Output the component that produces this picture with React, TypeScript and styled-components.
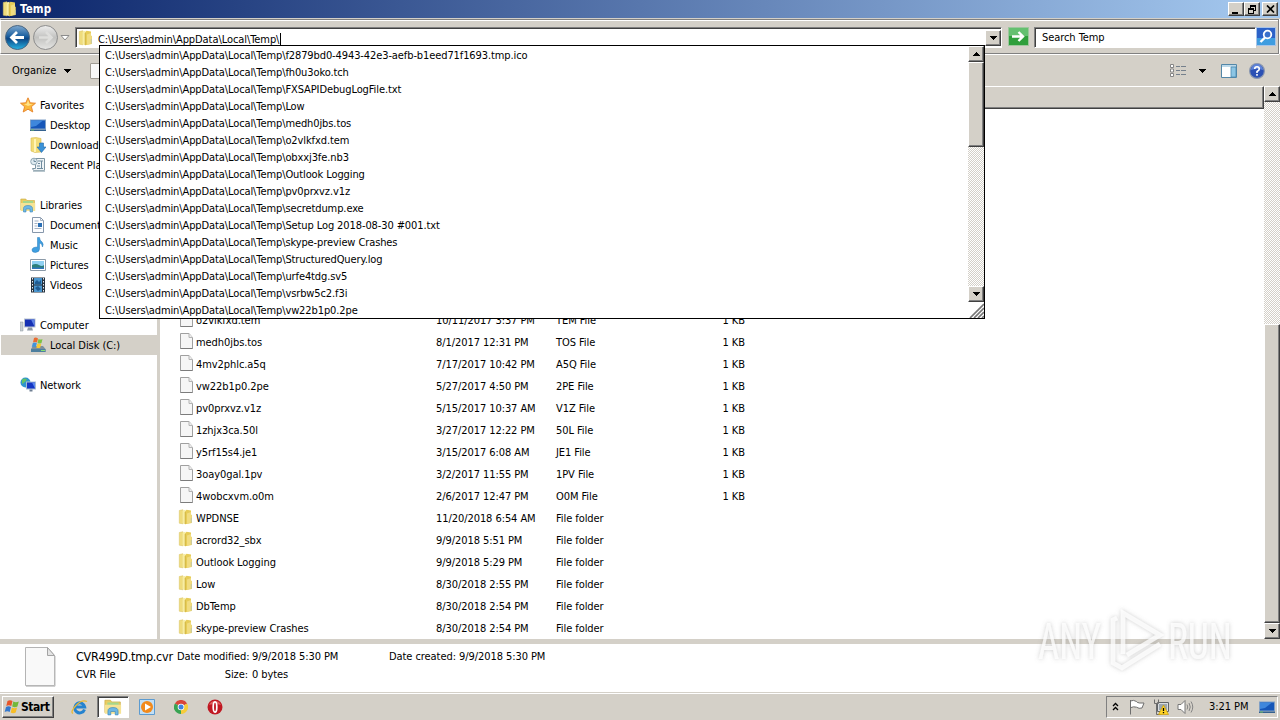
import * as React from 'react';
import styled, { createGlobalStyle, css } from 'styled-components';

const GlobalStyle = createGlobalStyle`
  * { box-sizing: border-box; }
  body {
    margin: 0;
    overflow: hidden;
    background: #d4d0c8;
    color: #000;
    font-family: "DejaVu Sans Condensed", "DejaVu Sans", sans-serif;
    font-stretch: condensed;
    font-size: 11px;
    letter-spacing: -0.07px;
    white-space: nowrap;
  }
  svg { display: block; flex: none; }
`;

const raised = css`
  background: #d4d0c8;
  border: 1px solid;
  border-color: #fff #404040 #404040 #fff;
  box-shadow: inset -1px -1px #808080;
`;

const sunken = css`
  border: 1px solid;
  border-color: #808080 #fff #fff #808080;
  box-shadow: inset 1px 1px #404040;
`;

const Screen = styled.div`
  position: relative;
  width: 1280px;
  height: 720px;
  display: flex;
  flex-direction: column;
  overflow: hidden;
`;

const TitleBar = styled.div`
  height: 18px;
  display: flex;
  align-items: center;
  padding: 0 2px;
  gap: 2px;
  background: linear-gradient(90deg, #0a246a, #a6caf0);
`;

const TitleText = styled.div`
  flex: 1;
  color: #fff;
  font-weight: bold;
  font-size: 11.5px;
  letter-spacing: 0.1px;
`;

const CaptionButton = styled.div<{ $gap?: boolean }>`
  ${raised}
  width: 16px;
  height: 14px;
  margin-left: ${p => (p.$gap ? 2 : 0)}px;
  margin-right: ${p => (p.$gap ? 0 : -2)}px;
  display: flex;
  align-items: center;
  justify-content: center;
`;

const NavBar = styled.div`
  height: 35px;
  margin: 1px 1px 0 0;
  display: flex;
  align-items: flex-start;
  padding: 7px 0 0 4px;
  border: 1px solid #808080;
  border-left-color: #fff;
  box-shadow: inset 0 1px #fff, 0 1px #fff, 1px 0 #fff;
`;

const AddressField = styled.div`
  ${sunken}
  width: 927px;
  height: 21px;
  margin-left: 5px;
  padding: 2px 0 1px 2px;
  display: flex;
  align-items: center;
  background: #fff;
`;

const AddressText = styled.div`
  flex: 1;
  margin: 3px 0 0 4px;
  display: flex;
`;

const Caret = styled.span`
  width: 1px;
  height: 13px;
  margin-left: 1px;
  background: #000;
`;

const GoButton = styled.div`
  margin: 0 5px 0 6px;
`;

const SearchField = styled.div`
  ${sunken}
  width: 222px;
  height: 21px;
  padding: 0 7px 1px;
  display: flex;
  align-items: center;
  background: #fff;
`;

const Toolbar = styled.div`
  height: 32px;
  padding: 1px 15px 0 12px;
  display: flex;
  align-items: center;
  letter-spacing: 0;
`;

const ToolbarButton = styled.div`
  width: 30px;
  height: 16px;
  margin-left: 19px;
  border: 1px solid #a09c94;
  border-radius: 1px;
  background: #f8f8f8;
`;

const Spacer = styled.div`
  flex: 1;
`;

const Gap = styled.div<{ $w: number }>`
  width: ${p => p.$w}px;
`;

const Body = styled.div`
  height: 553px;
  display: flex;
  background: #fff;
`;

const Sidebar = styled.div`
  width: 160px;
  padding: 9px 0 0 1px;
  border-right: 3px solid #d4d0c8;
  overflow: hidden;
`;

const SideRow = styled.div<{ $level: number; $selected?: boolean; $last?: boolean }>`
  height: 20px;
  display: flex;
  align-items: center;
  gap: 4px;
  padding-left: ${p => (p.$level ? 29 : 19)}px;
  margin-bottom: ${p => (p.$last ? 20 : 0)}px;
  background: ${p => (p.$selected ? '#d4d0c8' : 'transparent')};
`;

const Listing = styled.div`
  flex: 1;
  display: flex;
  flex-direction: column;
`;

const ColumnHeader = styled.div`
  ${raised}
  height: 23px;
`;

const Rows = styled.div`
  flex: 1;
  display: flex;
  flex-direction: column;
  justify-content: flex-end;
`;

const FileRow = styled.div`
  height: 22px;
  display: grid;
  grid-template-columns: 18px 240px 120px 120px 69px;
  align-items: center;
  padding-left: 18px;
`;

const FileGlyph = styled.div<{ $file: boolean }>`
  padding: 0 0 2px ${p => (p.$file ? 2 : 0)}px;
`;

const SizeCell = styled.div`
  text-align: right;
`;

const ScrollTrack = styled.div`
  width: 16px;
  display: flex;
  flex-direction: column;
  background: repeating-conic-gradient(#d4d0c8 0 25%, #fff 0 50%) 0 0 / 2px 2px;
`;

const ScrollButton = styled.div`
  ${raised}
  height: 16px;
  flex: none;
  display: flex;
  align-items: center;
  justify-content: center;
`;

const ScrollThumb = styled.div<{ $h: number }>`
  ${raised}
  height: ${p => p.$h}px;
`;

const Details = styled.div`
  height: 53px;
  border-top: 5px solid #d4d0c8;
  background: #fff;
  display: flex;
  padding: 3px 0 0 24px;
`;

const DetailGrid = styled.div`
  display: grid;
  grid-template-columns: 101px 75px 137px 70px 100px;
  grid-auto-rows: 18px;
  align-items: center;
  height: 36px;
  margin-left: 20px;
`;

const DetailName = styled.div`
  font-size: 12.5px;
  letter-spacing: -0.25px;
`;

const DetailLabel = styled.div`
  text-align: right;
  padding-right: 4px;
`;

const Taskbar = styled.div`
  height: 28px;
  padding: 3px 2px 3px;
  display: flex;
  align-items: center;
  border-top: 1px solid #d4d0c8;
  box-shadow: inset 0 1px #fff;
`;

const StartButton = styled.div`
  ${raised}
  width: 52px;
  height: 22px;
  padding-left: 1px;
  display: flex;
  align-items: center;
  font-weight: bold;
  font-size: 12px;
  letter-spacing: -0.45px;
`;

const TaskItem = styled.div<{ $active?: boolean }>`
  width: 32px;
  height: 22px;
  display: flex;
  align-items: center;
  justify-content: center;
  ${p => p.$active && css`
    ${sunken}
    background: #fff;
  `}
`;

const TaskItems = styled.div`
  display: flex;
  gap: 2px;
  margin-left: 9px;
`;

const Tray = styled.div`
  width: 172px;
  height: 22px;
  padding: 0 2px 0 5px;
  display: flex;
  align-items: center;
  border: 1px solid;
  border-color: #808080 #fff #fff #808080;
`;

const Clock = styled.div`
  flex: 1;
  margin-left: 15px;
`;

const Suggestions = styled.div`
  position: absolute;
  left: 99px;
  top: 45px;
  width: 886px;
  height: 274px;
  display: flex;
  background: #fff;
  border: 1px solid #000;
`;

const SuggestionList = styled.div`
  flex: 1;
  overflow: hidden;
  padding: 1px 0 0 5px;
`;

const Suggestion = styled.div`
  height: 17px;
  line-height: 17px;
  letter-spacing: -0.1px;
`;

const SuggestionScroll = styled.div`
  display: flex;
  flex-direction: column;
`;

const SuggestionTrack = styled(ScrollTrack)`
  height: 256px;
`;

const Watermark = styled.svg`
  position: absolute;
  left: 1030px;
  top: 600px;
`;

const Arrow = ({ up }: { up?: boolean }) => (
  <svg width="7" height="4" shapeRendering="crispEdges">
    <path d={up ? 'M3 0h1v1h1v1h1v1h1v1H0V3h1V2h1V1h1z' : 'M0 0h7v1H6v1H5v1H4v1H3V3H2V2H1V1H0z'} />
  </svg>
);

const FolderIcon = () => (
  <svg width="16" height="16" viewBox="0 0 16 16">
    <path d="M1.300 1.500L5 .8v14l-3.700-.6z" fill="#efdc7c" stroke="#dcc668" strokeWidth=".6" />
    <path d="M4.500 1.500L7.500.8v14.500l-3-1z" fill="#f8eda2" />
    <path d="M7 2.500L8.500.8l4.500.7v4l.8.500v8L7 15.300z" fill="#e6cc58" />
    <path d="M9 4.500l4-1.500v10.500l-4 1.300z" fill="#f1dc80" />
    <path d="M7.200 3v12" stroke="#cdae3e" strokeWidth=".8" />
    <path d="M13.300 9v4.500" stroke="#b9c3b0" strokeWidth=".8" />
  </svg>
);

const FileIcon = ({ big }: { big?: boolean }) => (
  <svg width={big ? 32 : 15} height={big ? 40 : 16} viewBox={big ? '0 0 32 40' : '0 0 15 16'}>
    {big ? (
      <>
        <path d="M1.500.5h22l7 8v30h-29z" fill="#f9f9f9" stroke="#b4b4b4" />
        <path d="M23.500 .5v8h7z" fill="#e4e4e4" stroke="#a4a4a4" />
        <path d="M2 39.200h29V9" fill="none" stroke="#bbb" />
      </>
    ) : (
      <>
        <path d="M.500.5h8.500l3.500 4v11H.5z" fill="#f6f6f6" stroke="#a0a0a0" />
        <path d="M9 .5v4h3.500" fill="#eee" stroke="#b4b4b4" />
        <path d="M.5 15.500h12" stroke="#7c7c7c" />
      </>
    )}
  </svg>
);

const Monitor = () => (
  <svg width="16" height="16" viewBox="0 0 16 16">
    <path d="M0 2.500h16v10H0z" fill="#7f9fc6" />
    <path d="M1 3.500h14v8H1z" fill="#1656b8" />
    <path d="M1 3.500h12L6 9 1 10z" fill="#3f87dc" />
    <path d="M0 12.500h16v1.500H0z" fill="#34618f" />
    <path d="M1 13h3" stroke="#6fc06a" />
  </svg>
);

const LibraryIcon = ({ size = 16 }: { size?: number }) => (
  <svg width={size} height={size} viewBox="0 0 16 16">
    <path d="M.8 2h5l1 1.500h7.700V13H.8z" fill="#e9cd62" stroke="#c9a93c" strokeWidth=".6" />
    <path d="M3 4h10v4H3z" fill="#a6d78c" />
    <path d="M.8 6h14.400v8H.8z" fill="#f6e395" />
    <path d="M3.500 15v-3.500q0-3 4.500-3t4.500 3V15h-2.500v-3H6v3z" fill="#6db7e4" stroke="#3c88bb" strokeWidth=".6" />
  </svg>
);

const sideIcons: Record<string, React.ReactNode> = {
  star: (
    <svg width="16" height="16" viewBox="0 0 16 16">
      <path d="M8 .8l2.200 5 5.300.4-4.100 3.500 1.400 5.300L8 12.200 3.200 15l1.400-5.300L.5 6.200l5.300-.4z" fill="#fbb83c" stroke="#e5822a" strokeWidth=".9" />
      <path d="M8 3l1.500 4 3.500.3-5 1.700-4-2 2.800-.3z" fill="#ffe38a" />
    </svg>
  ),
  desktop: <Monitor />,
  downloads: (
    <svg width="16" height="16" viewBox="0 0 16 16">
      <path d="M1 1l5-.5 5 1V15l-6 .5L1 14z" fill="#f2dc77" stroke="#d6b94b" strokeWidth=".6" />
      <path d="M5 2v13" stroke="#fff4b5" strokeWidth="2" />
      <path d="M9.500 6h4v4H16l-4.500 5.500L7 10h2.500z" fill="#3a92d8" stroke="#2168a8" strokeWidth=".6" />
    </svg>
  ),
  recent: (
    <svg width="16" height="16" viewBox="0 0 16 16">
      <path d="M5.500 1.500h9v12h-11l-1-2h3z" fill="#eef3f6" stroke="#7d94a2" />
      <circle cx="4" cy="4.500" r="3.300" fill="#dfeaf0" stroke="#91a8b4" />
      <path d="M4 2.500v2h2M8 4h5M8 6.500h2M7 9h3M7 11.500h6M11.500 4v7" stroke="#6e8b9e" fill="none" />
      <path d="M3 13.500h12v1.500H3z" fill="#b8c6cd" />
    </svg>
  ),
  library: <LibraryIcon />,
  document: (
    <svg width="16" height="16" viewBox="0 0 16 16">
      <path d="M2.500.5h8l3 3v12h-11z" fill="#fcfdff" stroke="#8797ab" />
      <path d="M10.500.5v3h3M4.500 4h4M4.500 6.500h3M4.500 9h3M4.500 11.500h7" fill="none" stroke="#a5b2c2" />
      <path d="M8 6h4v4H8z" fill="#2a6fb5" />
    </svg>
  ),
  music: (
    <svg width="16" height="16" viewBox="0 0 16 16">
      <path d="M7.500.5h2q.2 3 2.500 4.500 2 2 .5 5-.3-3.500-3-4v6q0 3-4 3.500-3.500 0-3.500-2.500 0-2.800 5.500-3z" fill="#3f9fe0" stroke="#2678b8" strokeWidth=".5" />
    </svg>
  ),
  pictures: (
    <svg width="16" height="16" viewBox="0 0 16 16">
      <path d="M.5 2.500h15v11H.5z" fill="#fff" stroke="#8b9aa8" />
      <path d="M2 4h12v8H2z" fill="#8fd0f2" />
      <path d="M2 8q4-2 7 0t5 0v4H2z" fill="#2c7f7a" />
      <path d="M2 10.500h12V12H2z" fill="#2f76bd" />
    </svg>
  ),
  videos: (
    <svg width="16" height="16" viewBox="0 0 16 16">
      <path d="M1 .5h14v15H1z" fill="#26323e" />
      <path d="M4 1h8v6.500H4zM4 8.500h8V15H4z" fill="#4a96cf" />
      <path d="M5 5l2-2 2 2 2-2v4H5zM5 11l3-2 3 3-3 2z" fill="#1d5b93" />
      <path d="M2.500 1v14M13.500 1v14" stroke="#e8edf2" strokeDasharray="1.500 1.500" />
    </svg>
  ),
  computer: (
    <svg width="16" height="16" viewBox="0 0 16 16">
      <path d="M0 5h3v9H0z" fill="#c9cfd4" stroke="#8b949c" strokeWidth=".5" />
      <path d="M4 1.500h11.500v9H4z" fill="#b7c2d0" />
      <path d="M5 2.500h9.500v7H5z" fill="#1631b4" />
      <path d="M11 2.500h3.500v7z" fill="#5e82e6" />
      <path d="M8 10.500h4l1 3H7z" fill="#8d98a6" />
    </svg>
  ),
  disk: (
    <svg width="16" height="16" viewBox="0 0 16 16">
      <path d="M3 9h10l2.500 3v3H1v-3z" fill="#7d8f9c" />
      <path d="M1 12h14.500v3H1z" fill="#4d7f9e" />
      <path d="M11 13h4v1h-4z" fill="#84e070" />
      <path d="M4 1q2-1 4 .5L7 5.500q-2-1-4 0z" fill="#ea6a30" />
      <path d="M8.500 2q2 1 4 0l-1 4q-2 1-4 0z" fill="#7cc242" />
      <path d="M2.800 6q2-1 4 0L6 10q-2-1-4.200 0z" fill="#3f93dc" />
      <path d="M7.300 6.500q2 1 4 0l-1 4q-2 1-4 0z" fill="#f8c832" />
    </svg>
  ),
  network: (
    <svg width="16" height="16" viewBox="0 0 16 16">
      <circle cx="5.500" cy="5.500" r="5" fill="#2f94cf" />
      <path d="M2 2.500q3-2 5 0L5 5 2 7zM6 6l3-2v4H7z" fill="#62c268" />
      <path d="M6 4.500h10v8H6z" fill="#a8bcd3" />
      <path d="M7 5.500h8v6H7z" fill="#1437c4" />
      <path d="M12 5.500h3v6z" fill="#5a86ee" />
      <path d="M9.500 12.500h3v2h-3z" fill="#6e7f92" />
    </svg>
  ),
};

const WindowsFlag = () => (
  <svg width="17" height="16" viewBox="0 0 17 16">
    <path d="M3.500 2q2.500-1.500 5 0L7.300 7q-2.500-1.500-5 0z" fill="#e8562a" />
    <path d="M9.300 2.500q2.500 1.500 5.500 0l-1.400 5q-2.500 1.500-5.200 0z" fill="#73b83a" />
    <path d="M2 8q2.500-1.500 5 0l-1.300 5q-2.400-1.500-5 0z" fill="#3478ce" />
    <path d="M7.900 8.500q2.500 1.500 5.200 0l-1.400 5q-2.500 1.500-5 0z" fill="#f7bd26" />
  </svg>
);

const sideRows = [
  { label: 'Favorites', icon: 'star', level: 0 },
  { label: 'Desktop', icon: 'desktop', level: 1 },
  { label: 'Downloads', icon: 'downloads', level: 1 },
  { label: 'Recent Places', icon: 'recent', level: 1, last: true },
  { label: 'Libraries', icon: 'library', level: 0 },
  { label: 'Documents', icon: 'document', level: 1 },
  { label: 'Music', icon: 'music', level: 1 },
  { label: 'Pictures', icon: 'pictures', level: 1 },
  { label: 'Videos', icon: 'videos', level: 1, last: true },
  { label: 'Computer', icon: 'computer', level: 0 },
  { label: 'Local Disk (C:)', icon: 'disk', level: 1, selected: true, last: true },
  { label: 'Network', icon: 'network', level: 0 },
];

const files = [
  ['o2vlkfxd.tem', '10/11/2017 3:37 PM', 'TEM File', '1 KB'],
  ['medh0jbs.tos', '8/1/2017 12:31 PM', 'TOS File', '1 KB'],
  ['4mv2phlc.a5q', '7/17/2017 10:42 PM', 'A5Q File', '1 KB'],
  ['vw22b1p0.2pe', '5/27/2017 4:50 PM', '2PE File', '1 KB'],
  ['pv0prxvz.v1z', '5/15/2017 10:37 AM', 'V1Z File', '1 KB'],
  ['1zhjx3ca.50l', '3/27/2017 12:22 PM', '50L File', '1 KB'],
  ['y5rf15s4.je1', '3/15/2017 6:08 AM', 'JE1 File', '1 KB'],
  ['3oay0gal.1pv', '3/2/2017 11:55 PM', '1PV File', '1 KB'],
  ['4wobcxvm.o0m', '2/6/2017 12:47 PM', 'O0M File', '1 KB'],
  ['WPDNSE', '11/20/2018 6:54 AM', 'File folder', ''],
  ['acrord32_sbx', '9/9/2018 5:51 PM', 'File folder', ''],
  ['Outlook Logging', '9/9/2018 5:29 PM', 'File folder', ''],
  ['Low', '8/30/2018 2:55 PM', 'File folder', ''],
  ['DbTemp', '8/30/2018 2:54 PM', 'File folder', ''],
  ['skype-preview Crashes', '8/30/2018 2:54 PM', 'File folder', ''],
];

const basePath = 'C:\\Users\\admin\\AppData\\Local\\Temp\\';

const suggestions = [
  'f2879bd0-4943-42e3-aefb-b1eed71f1693.tmp.ico',
  'fh0u3oko.tch',
  'FXSAPIDebugLogFile.txt',
  'Low',
  'medh0jbs.tos',
  'o2vlkfxd.tem',
  'obxxj3fe.nb3',
  'Outlook Logging',
  'pv0prxvz.v1z',
  'secretdump.exe',
  'Setup Log 2018-08-30 #001.txt',
  'skype-preview Crashes',
  'StructuredQuery.log',
  'urfe4tdg.sv5',
  'vsrbw5c2.f3i',
  'vw22b1p0.2pe',
];

function Navigation() {
  return (
    <NavBar>
      <svg width="65" height="28" viewBox="0 0 65 28" overflow="visible">
        <defs>
          <linearGradient id="back" x2="0" y2="1">
            <stop offset="0" stopColor="#7fa9d0" />
            <stop offset=".45" stopColor="#1b5f9f" />
            <stop offset=".55" stopColor="#0c4685" />
            <stop offset="1" stopColor="#27b4e4" />
          </linearGradient>
          <linearGradient id="fwd" x2="0" y2="1">
            <stop offset="0" stopColor="#eee" />
            <stop offset=".5" stopColor="#c2c2c0" />
            <stop offset="1" stopColor="#e6e6e4" />
          </linearGradient>
        </defs>
        <circle cx="12.500" cy="10.500" r="12" fill="url(#back)" stroke="#4b6680" />
        <path d="M19 10.500H7M12 5l-5.500 5.500L12 16" fill="none" stroke="#fff" strokeWidth="2.800" />
        <circle cx="40.500" cy="10.500" r="12" fill="url(#fwd)" stroke="#8c8c8c" />
        <path d="M34 10.500h12M41 5l5.500 5.500L41 16" fill="none" stroke="#dededc" strokeWidth="2.600" />
        <path d="M56 8.500h8l-4 4.500z" fill="#fff" stroke="#8c8c8c" />
      </svg>
      <AddressField>
        <FolderIcon />
        <AddressText>{basePath}<Caret /></AddressText>
        <ScrollTrack>
          <ScrollButton><Arrow /></ScrollButton>
        </ScrollTrack>
      </AddressField>
      <GoButton>
        <svg width="21" height="20" viewBox="0 0 21 20">
          <path d="M.5.500h20v18H.5z" fill="#2f9f3c" stroke="#9ec79e" />
          <path d="M1 1h19v8H1z" fill="#64c070" />
          <path d="M4 9.500h11M10.500 5l4.500 4.500-4.500 4.500" fill="none" stroke="#fff" strokeWidth="2.400" />
        </svg>
      </GoButton>
      <SearchField>Search Temp</SearchField>
      <svg width="20" height="20" viewBox="0 0 20 20">
        <path d="M.5.500h19v18H.5z" fill="#2c62c8" stroke="#a8c4e8" />
        <path d="M1 11h18v7H1z" fill="#3f9de0" />
        <circle cx="11.500" cy="7.500" r="3.800" fill="#3a70cc" stroke="#fff" strokeWidth="1.800" />
        <path d="M9 10.500L4.500 15" stroke="#fff" strokeWidth="2.400" />
      </svg>
    </NavBar>
  );
}

function Tools() {
  return (
    <Toolbar>
      Organize
      <Gap $w={8} />
      <Arrow />
      <ToolbarButton />
      <Spacer />
      <svg width="17" height="14" viewBox="0 0 17 14">
        <path d="M.5.500h3v3h-3zM.5 5h3v3h-3zM.5 9.500h3v3h-3z" fill="#fff" stroke="#858585" />
        <path d="M6 2.500h4M11 2.500h5M6 6.500h4M11 6.500h5M6 10.500h4M11 10.500h5" stroke="#75808c" />
      </svg>
      <Gap $w={12} />
      <Arrow />
      <Gap $w={15} />
      <svg width="16" height="14" viewBox="0 0 16 14">
        <path d="M.5.500h15v13H.5z" fill="#fff" stroke="#5387a8" />
        <path d="M1 1h14v2H1z" fill="#bcd9ea" />
        <path d="M10 3h5v10h-5z" fill="#8cc5e4" stroke="#4c88ad" strokeWidth=".8" />
      </svg>
      <Gap $w={12} />
      <svg width="16" height="16" viewBox="0 0 16 16">
        <circle cx="8" cy="8" r="7.400" fill="#2b50b4" stroke="#8b98b0" strokeWidth="1.200" />
        <path d="M2 7a6 6 0 0 1 12 0q-6-2-12 0z" fill="#5f83d8" />
        <path d="M5.700 6q0-2.300 2.300-2.300T10.300 6Q10.300 7.300 8 8.500V10M8 11v1.800" fill="none" stroke="#fff" strokeWidth="1.600" />
      </svg>
    </Toolbar>
  );
}

export default function App() {
  return (
    <>
      <GlobalStyle />
      <Screen>
        <TitleBar>
          <FolderIcon />
          <TitleText>Temp</TitleText>
          <CaptionButton>
            <svg width="10" height="9"><path d="M1 7h6v2H1z" /></svg>
          </CaptionButton>
          <CaptionButton>
            <svg width="10" height="9" viewBox="0 0 10 9" shapeRendering="crispEdges">
              <path d="M3 0h6v6H7V5h1V2H4v1H3zM1 3h6v6H1zM2 5v3h4V5z" fillRule="evenodd" />
            </svg>
          </CaptionButton>
          <CaptionButton $gap>
            <svg width="9" height="8" viewBox="0 0 9 8"><path d="M1 .5l7 7M8 .5l-7 7" stroke="#000" strokeWidth="1.700" /></svg>
          </CaptionButton>
        </TitleBar>
        <Navigation />
        <Tools />

        <Body>
          <Sidebar>
            {sideRows.map(row => (
              <SideRow key={row.label} $level={row.level} $selected={row.selected} $last={row.last}>
                {sideIcons[row.icon]}
                {row.label}
              </SideRow>
            ))}
          </Sidebar>
          <Listing>
            <ColumnHeader />
            <Rows>
              {files.map(([name, date, type, size]) => (
                <FileRow key={name}>
                  <FileGlyph $file={!!size}>{size ? <FileIcon /> : <FolderIcon />}</FileGlyph>
                  <div>{name}</div>
                  <div>{date}</div>
                  <div>{type}</div>
                  <SizeCell>{size}</SizeCell>
                </FileRow>
              ))}
            </Rows>
          </Listing>
          <ScrollTrack>
            <ScrollButton><Arrow up /></ScrollButton>
            <Spacer />
            <ScrollThumb $h={299} />
            <ScrollButton><Arrow /></ScrollButton>
          </ScrollTrack>
        </Body>

        <Details>
          <FileIcon big />
          <DetailGrid>
            <DetailName>CVR499D.tmp.cvr</DetailName>
            <DetailLabel>Date modified:</DetailLabel>
            <div>9/9/2018 5:30 PM</div>
            <DetailLabel>Date created:</DetailLabel>
            <div>9/9/2018 5:30 PM</div>
            <div>CVR File</div>
            <DetailLabel>Size:</DetailLabel>
            <div>0 bytes</div>
          </DetailGrid>
        </Details>

        <Taskbar>
          <StartButton><WindowsFlag />Start</StartButton>
          <TaskItems>
            <TaskItem>
              <svg width="17" height="16" viewBox="0 0 17 16">
                <path d="M13.500 10.500A5 5 0 1 1 13.700 8H5" fill="none" stroke="#2583cf" strokeWidth="3" />
                <path d="M2 14.500Q-1 13 5 6.500T16 2.500" fill="none" stroke="#eab934" strokeWidth="1.300" />
              </svg>
            </TaskItem>
            <TaskItem $active><LibraryIcon size={18} /></TaskItem>
            <TaskItem>
              <svg width="16" height="16" viewBox="0 0 16 16">
                <path d="M.5.500h15v15H.5z" fill="#c2dff5" stroke="#5c9bd0" />
                <circle cx="8" cy="8" r="6" fill="#f28a1c" />
                <path d="M6 4.500l6 3.500-6 3.500z" fill="#fff" />
              </svg>
            </TaskItem>
            <TaskItem>
              <svg width="14" height="14" viewBox="0 0 14 14">
                <path d="M7 7L.9 3.500A7 7 0 0 1 13.100 3.500z" fill="#d9443a" />
                <path d="M7 7L.9 3.500A7 7 0 0 0 7 14z" fill="#38a352" />
                <path d="M7 7l6.100-3.500A7 7 0 0 1 7 14z" fill="#f6cc3b" />
                <circle cx="7" cy="7" r="3.300" fill="#fff" />
                <circle cx="7" cy="7" r="2.500" fill="#4082e0" />
              </svg>
            </TaskItem>
            <TaskItem>
              <svg width="16" height="16" viewBox="0 0 16 16">
                <circle cx="8" cy="8" r="7.500" fill="#c01822" />
                <path d="M2 6a6.500 6.500 0 0 1 12 0q-6-2-12 0z" fill="#de5c5c" />
                <ellipse cx="8" cy="8" rx="1.800" ry="5.200" fill="#c01822" stroke="#fff" strokeWidth="1.700" />
              </svg>
            </TaskItem>
          </TaskItems>
          <Spacer />
          <Tray>
            <svg width="7" height="9" viewBox="0 0 7 9"><path d="M1 4l2.500-2.500L6 4M1 8l2.500-2.500L6 8" fill="none" stroke="#000" strokeWidth="1.300" /></svg>
            <Gap $w={10} />
            <svg width="16" height="16" viewBox="0 0 16 16">
              <path d="M1.500 1v14.500M1.500 2q3-1.500 6 .5 0 1 3 1.500h4.500l-2 5q-3 1-5.500-.8-3-1-6 .5" fill="#fff" stroke="#6e6e6e" />
            </svg>
            <Gap $w={8} />
            <svg width="16" height="16" viewBox="0 0 16 16">
              <path d="M4.500 3.500h11v9h-11z" fill="#d8dce0" stroke="#606468" />
              <path d="M1.500.5v4h4v-4M3.500 4.500v11h4" fill="none" stroke="#6c6c6c" />
              <path d="M6 5h8v6H6z" fill="#9ca6ae" />
              <path d="M10.500 6l5 9.500h-10z" fill="#ffd324" stroke="#c79b09" strokeWidth=".7" />
              <path d="M10.500 9v3M10.500 13v1.300" stroke="#000" strokeWidth="1.300" />
            </svg>
            <Gap $w={8} />
            <svg width="17" height="16" viewBox="0 0 17 16">
              <path d="M1 5.500h3l4-4v13l-4-4H1z" fill="#fff" stroke="#777" />
              <path d="M10 5.500q1.500 2.500 0 5M12 4q2.500 4 0 8M14 2.500q3.500 5.500 0 11" fill="none" stroke="#858585" />
            </svg>
            <Clock>3:21 PM</Clock>
            <Monitor />
          </Tray>
        </Taskbar>

        <Suggestions>
          <SuggestionList>
            {suggestions.map(name => (
              <Suggestion key={name}>{basePath}{name}</Suggestion>
            ))}
          </SuggestionList>
          <SuggestionScroll>
            <SuggestionTrack>
              <ScrollButton><Arrow up /></ScrollButton>
              <ScrollThumb $h={85} />
              <Spacer />
              <ScrollButton><Arrow /></ScrollButton>
            </SuggestionTrack>
            <svg width="16" height="16" viewBox="0 0 16 16">
              <path d="M2 16L16 2M6 16L16 6M10 16l6-6M14 16l2-2" stroke="#777" strokeWidth="1.700" />
            </svg>
          </SuggestionScroll>
        </Suggestions>

        <Watermark width="215" height="80" viewBox="0 0 215 80">
          <defs>
            <filter id="glow" x="-10%" y="-20%" width="120%" height="140%">
              <feDropShadow dx="0" dy="0" stdDeviation="2" floodColor="#777" floodOpacity=".5" />
            </filter>
          </defs>
          <g filter="url(#glow)" fill="#fff" fillOpacity=".75" fontFamily="Roboto, sans-serif" fontSize="50" letterSpacing="0">
            <text x="8" y="59" textLength="63" lengthAdjust="spacingAndGlyphs">ANY</text>
            <text x="138" y="59" textLength="64" lengthAdjust="spacingAndGlyphs">RUN</text>
            <path
              d="M93 54V13l37 22-33 20M87 18l-4 2v43l9 5 38-24"
              fill="none"
              stroke="#fff"
              strokeOpacity=".75"
              strokeWidth="4.500"
            />
          </g>
        </Watermark>
      </Screen>
    </>
  );
}
